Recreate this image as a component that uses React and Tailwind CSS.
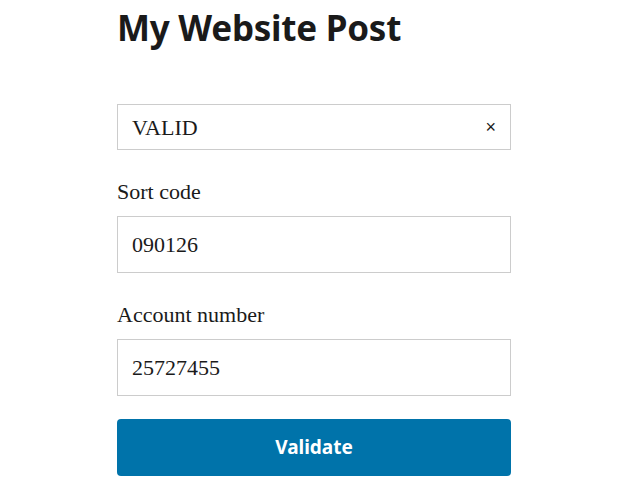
export default function App() {
  return (
    <div className="min-h-screen bg-white">
      <div className="ml-[117px] w-[394px] pt-[4px]">
        <h1 className="font-['Noto_Sans',sans-serif] text-[35px] font-bold leading-[48px] text-[#1a1a1a] tracking-[-0.25px]">
          My Website Post
        </h1>

        <div className="mt-[52px] flex h-[46px] items-center justify-between border border-[#ccc] px-[14px] font-['Liberation_Serif',serif] text-[22px] text-[#1a1a1a]">
          <span>VALID</span>
          <span className="font-['Liberation_Sans',sans-serif] text-[18px]">×</span>
        </div>

        <label className="mt-[30px] block font-['Liberation_Serif',serif] text-[22px] leading-[24px] text-[#1a1a1a]">
          Sort code
        </label>
        <input
          className="mt-[12px] block h-[57px] w-full border border-[#ccc] px-[14px] font-['Liberation_Serif',serif] text-[22px] text-[#1a1a1a] outline-none"
          defaultValue="090126"
        />

        <label className="mt-[30px] block font-['Liberation_Serif',serif] text-[22px] leading-[24px] text-[#1a1a1a]">
          Account number
        </label>
        <input
          className="mt-[12px] block h-[57px] w-full border border-[#ccc] px-[14px] font-['Liberation_Serif',serif] text-[22px] text-[#1a1a1a] outline-none"
          defaultValue="25727455"
        />

        <button className="mt-[23px] block h-[57px] w-full rounded-[4px] bg-[#0073aa] font-['Noto_Sans',sans-serif] text-[19px] font-bold text-white">
          Validate
        </button>
      </div>
    </div>
  )
}
